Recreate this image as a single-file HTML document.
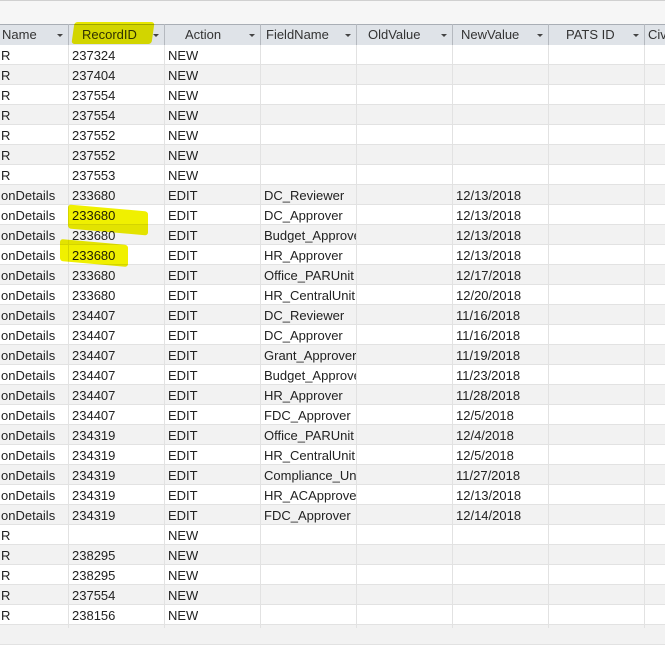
<!DOCTYPE html>
<html><head><style>
body{margin:0;width:665px;height:628px;overflow:hidden;background:#fff;font-family:"Liberation Sans",sans-serif;font-size:13px;color:#222;position:relative}
.top{position:absolute;left:0;top:0;width:665px;height:24px;background:#f6f6f6;border-top:1px solid #d0d0d0}
.hdr{position:absolute;left:0;top:24px;width:665px;height:20px;background:#dfe3e8;border-top:1px solid #a9aeb5;border-bottom:1px solid #c9cdd2}
.r{position:absolute;left:0;width:665px;height:19px;border-bottom:1px solid #e2e2e2}
.c{position:absolute;top:1px;line-height:20px;white-space:nowrap;overflow:hidden}
.v{position:absolute;top:24px;width:1px;height:604px;background:#e2e2e2}
.hv{position:absolute;top:24px;width:1px;height:21px;background:#b5b9bf}
.a{position:absolute;top:34px;width:0;height:0;border-left:3px solid transparent;border-right:3px solid transparent;border-top:3px solid #444}
.h{position:absolute;top:25px;line-height:19px;color:#333}
.y{position:absolute;background:#f0f000;mix-blend-mode:multiply;z-index:5}
</style></head><body>
<div class="top"></div>
<div class="hdr"></div>
<div id="rows"></div>
<div class="y" style="left:73px;top:22px;width:80px;height:22px;transform:skewX(-8deg);border-radius:3px"></div>
<div class="y" style="left:68px;top:208px;width:80px;height:24px;transform:skewY(5deg);border-radius:3px"></div>
<div class="y" style="left:60px;top:242px;width:68px;height:22px;transform:skewY(5deg);border-radius:3px"></div>
<div class="h" style="left:2px">Name</div>
<div class="h" style="left:82px">RecordID</div>
<div class="h" style="left:185px">Action</div>
<div class="h" style="left:266px">FieldName</div>
<div class="h" style="left:368px">OldValue</div>
<div class="h" style="left:461px">NewValue</div>
<div class="h" style="left:566px">PATS ID</div>
<div class="h" style="left:648px">Civ</div>
<script>
var d=[["R","237324","NEW","",""],["R","237404","NEW","",""],["R","237554","NEW","",""],["R","237554","NEW","",""],["R","237552","NEW","",""],["R","237552","NEW","",""],["R","237553","NEW","",""],
["onDetails","233680","EDIT","DC_Reviewer","12/13/2018"],["onDetails","233680","EDIT","DC_Approver","12/13/2018"],["onDetails","233680","EDIT","Budget_Approver","12/13/2018"],["onDetails","233680","EDIT","HR_Approver","12/13/2018"],["onDetails","233680","EDIT","Office_PARUnit","12/17/2018"],["onDetails","233680","EDIT","HR_CentralUnit","12/20/2018"],["onDetails","234407","EDIT","DC_Reviewer","11/16/2018"],["onDetails","234407","EDIT","DC_Approver","11/16/2018"],["onDetails","234407","EDIT","Grant_Approver","11/19/2018"],["onDetails","234407","EDIT","Budget_Approver","11/23/2018"],["onDetails","234407","EDIT","HR_Approver","11/28/2018"],["onDetails","234407","EDIT","FDC_Approver","12/5/2018"],["onDetails","234319","EDIT","Office_PARUnit","12/4/2018"],["onDetails","234319","EDIT","HR_CentralUnit","12/5/2018"],["onDetails","234319","EDIT","Compliance_Unit","11/27/2018"],["onDetails","234319","EDIT","HR_ACApprover","12/13/2018"],["onDetails","234319","EDIT","FDC_Approver","12/14/2018"],
["R","","NEW","",""],["R","238295","NEW","",""],["R","238295","NEW","",""],["R","237554","NEW","",""],["R","238156","NEW","",""],["","","","",""]];
var h="";
d.forEach(function(r,i){var t=45+i*20;h+='<div class="r" style="top:'+t+'px;background:'+(i%2?'#f2f2f2':'#fff')+'">'+
'<div class="c" style="left:1px;width:66px">'+r[0]+'</div><div class="c" style="left:72px">'+r[1]+'</div><div class="c" style="left:168px">'+r[2]+'</div><div class="c" style="left:264px;width:92px">'+r[3]+'</div><div class="c" style="left:456px">'+r[4]+'</div></div>';});
[68,164,260,356,452,548,644].forEach(function(x){h+='<div class="v" style="left:'+x+'px"></div><div class="hv" style="left:'+x+'px"></div><div class="a" style="left:'+(x-11)+'px"></div>';});
document.getElementById("rows").innerHTML=h;
</script>
</body></html>
